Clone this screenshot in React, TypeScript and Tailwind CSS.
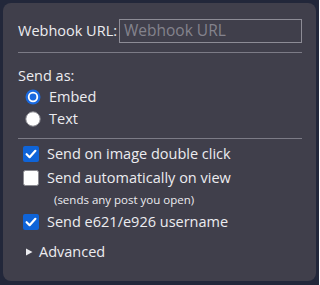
import React from "react";

const font = { fontFamily: '"Open Sans", "Noto Sans", sans-serif' };

function Checkbox({ checked }: { checked: boolean }) {
  return checked ? (
    <svg width="16" height="16" viewBox="0 0 16 16" className="shrink-0">
      <rect x="0" y="0" width="16" height="16" rx="2" fill="#0f64d8" />
      <path d="M3.6 8.2 L6.6 11.2 L12.4 4.8" fill="none" stroke="#ffffff" strokeWidth="2.2" strokeLinecap="round" strokeLinejoin="round" />
    </svg>
  ) : (
    <svg width="16" height="16" viewBox="0 0 16 16" className="shrink-0">
      <rect x="0.5" y="0.5" width="15" height="15" rx="2" fill="#ffffff" stroke="#8a8a90" />
    </svg>
  );
}

function Radio({ checked }: { checked: boolean }) {
  return checked ? (
    <svg width="16" height="16" viewBox="0 0 16 16" className="shrink-0">
      <circle cx="8" cy="8" r="7.5" fill="#1a6ae0" />
      <circle cx="8" cy="8" r="5.2" fill="#ffffff" />
      <circle cx="8" cy="8" r="3.4" fill="#1a6ae0" />
    </svg>
  ) : (
    <svg width="16" height="16" viewBox="0 0 16 16" className="shrink-0">
      <circle cx="8" cy="8" r="7.2" fill="#ffffff" stroke="#8a8a90" strokeWidth="1" />
    </svg>
  );
}

export default function App() {
  return (
    <div className="w-[319px] h-[285px] bg-[#22273a] pt-[3px] pl-[3px] pr-[3px] pb-[4px]" style={font}>
      <div className="h-[278px] rounded-[8px] bg-[#403f4b] pl-[15px] pt-[16px] text-[14.5px] text-[#ececf0] leading-none">
        <div className="flex items-center h-[24px]">
          <span>Webhook URL:</span>
          <div className="ml-[2px] w-[183px] h-[24px] border border-[#8d8c96] flex items-center px-[4px] text-[15.5px] text-[#84838d]">
            Webhook URL
          </div>
        </div>
        <div className="mt-[9px] h-px w-[284px] bg-[#7c7b86]" />
        <div className="mt-[14px] h-[18px] flex items-center">Send as:</div>
        <div className="mt-[1px] h-[22px] flex items-center pl-[7px] gap-[8px]">
          <Radio checked />
          <span>Embed</span>
        </div>
        <div className="h-[22px] flex items-center pl-[7px] gap-[8px]">
          <Radio checked={false} />
          <span>Text</span>
        </div>
        <div className="mt-[8px] h-px w-[284px] bg-[#7c7b86]" />
        <div className="mt-[3px] h-[24px] flex items-center pl-[5px] gap-[8px]">
          <Checkbox checked />
          <span>Send on image double click</span>
        </div>
        <div className="h-[24px] flex items-center pl-[5px] gap-[8px]">
          <Checkbox checked={false} />
          <span>Send automatically on view</span>
        </div>
        <div className="h-[20px] flex items-center pl-[36px] text-[11.5px]">(sends any post you open)</div>
        <div className="h-[24px] flex items-center pl-[5px] gap-[8px]">
          <Checkbox checked />
          <span>Send e621/e926 username</span>
        </div>
        <div className="mt-[7px] h-[22px] flex items-center pl-[8px] gap-[6px]">
          <svg width="7" height="8" viewBox="0 0 7 8" className="shrink-0">
            <path d="M0 0.5 L6.5 4 L0 7.5 Z" fill="#ececf0" />
          </svg>
          <span>Advanced</span>
        </div>
      </div>
    </div>
  );
}
